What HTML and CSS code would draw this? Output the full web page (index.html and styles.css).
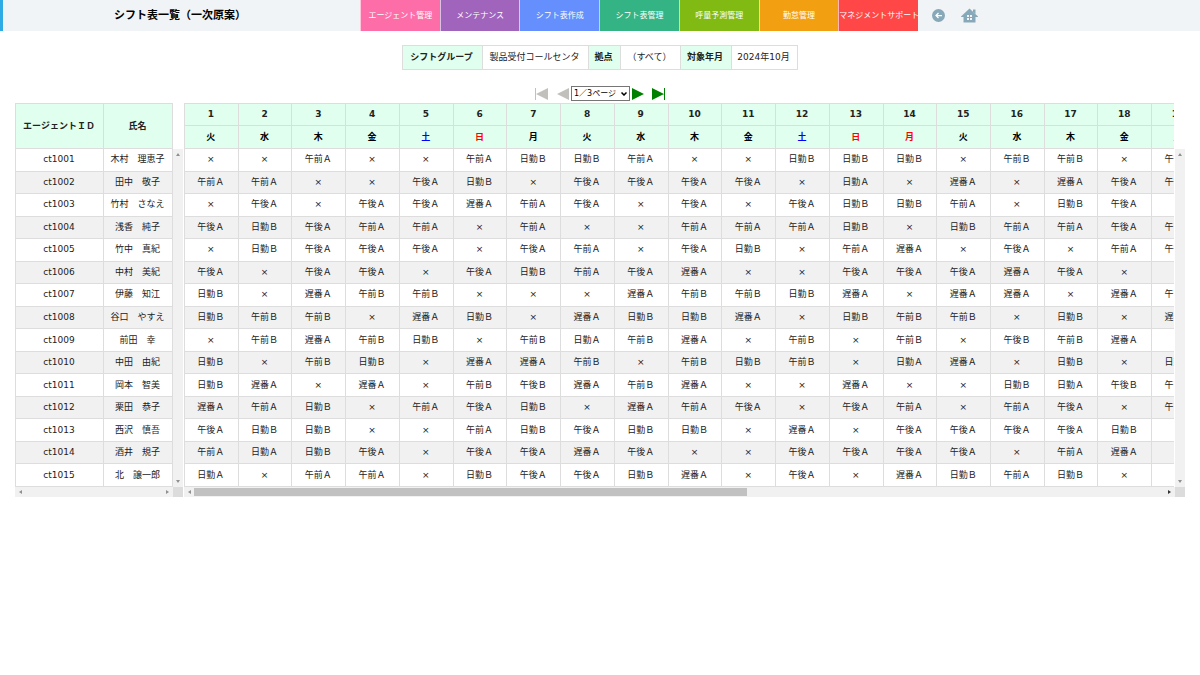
FILE: index.html
```html
<!DOCTYPE html>
<html lang="ja">
<head>
<meta charset="utf-8">
<title>シフト表一覧（一次原案）</title>
<link rel="stylesheet" href="styles.css">
</head>
<body>
<header class="topbar">
  <h1 class="title">シフト表一覧（一次原案）</h1>
  <nav class="menu">
    <a class="menu-item pink" href="#">エージェント管理</a>
    <a class="menu-item purple" href="#">メンテナンス</a>
    <a class="menu-item blue" href="#">シフト表作成</a>
    <a class="menu-item green" href="#">シフト表管理</a>
    <a class="menu-item lime" href="#">呼量予測管理</a>
    <a class="menu-item orange" href="#">勤怠管理</a>
    <a class="menu-item red" href="#">マネジメントサポート</a>
  </nav>
  <div class="tools">
    <a class="tool" href="#" aria-label="戻る"><svg width="13" height="13" viewBox="0 0 26 26"><circle cx="13" cy="13" r="13" fill="#87a8b8"/><path d="M20 13H8M13 8l-5 5 5 5" fill="none" stroke="#fff" stroke-width="2.500"/></svg></a>
    <a class="tool" href="#" aria-label="ホーム"><svg width="17" height="15" viewBox="0 0 34 30"><path d="M17 1L34 17v1h-5v11H5V18H0v-1z" fill="#87a8b8"/><path d="M24 3h5v9l-5-4z" fill="#87a8b8"/><path d="M12 14h4v4h-4zM18 14h4v4h-4zM12 20h4v4h-4zM18 20h4v4h-4z" fill="#f0f4f7"/></svg></a>
  </div>
</header>

<main class="content">
  <table class="filters">
    <tr>
      <th class="w-group" scope="row">シフトグループ</th><td class="w-group-value">製品受付コールセンタ</td>
      <th class="w-site" scope="row">拠点</th><td class="w-site-value">（すべて）</td>
      <th class="w-month" scope="row">対象年月</th><td class="w-month-value">2024年10月</td>
    </tr>
  </table>

  <div class="pager">
    <button class="page-button off" type="button" aria-label="最初のページ" disabled><svg width="13" height="12" viewBox="0 0 13 12"><path d="M0 0h1v12H0zM13 0v12L1 6z" fill="currentColor"/></svg></button>
    <button class="page-button off" type="button" aria-label="前のページ" disabled><svg width="12" height="12" viewBox="0 0 12 12"><path d="M12 0v12L0 6z" fill="currentColor"/></svg></button>
    <span class="page-select">
      <select aria-label="ページ"><option>1／3ページ</option></select>
      <svg class="chevron" width="6" height="4" viewBox="0 0 6 4"><path d="M0.500 0.500L3 3 5.500 0.500" fill="none" stroke="#000" stroke-width="1.500"/></svg>
    </span>
    <button class="page-button" type="button" aria-label="次のページ"><svg width="12" height="12" viewBox="0 0 12 12"><path d="M0 0v12l12-6z" fill="currentColor"/></svg></button>
    <button class="page-button last" type="button" aria-label="最後のページ"><svg width="13" height="12" viewBox="0 0 13 12"><path d="M12 0h1v12h-1zM0 0v12l12-6z" fill="currentColor"/></svg></button>
  </div>

  <div class="panels">
    <section class="panel agents">
      <div class="view">
        <table class="grid agent-grid">
          <thead><tr class="tall"><th class="col-id" scope="col">エージェントＩＤ</th><th scope="col">氏名</th></tr></thead>
          <tbody id="agents"></tbody>
        </table>
      </div>
      <div class="vbar"><i class="arrow up"></i><i class="arrow down"></i></div>
      <div class="hbar"><i class="arrow left"></i><i class="arrow right"></i></div>
      <div class="corner"></div>
    </section>
    <section class="panel shifts">
      <div class="view">
        <table class="grid shift-grid">
          <thead><tr class="date-row" id="dates"></tr><tr class="weekday-row" id="weekdays"></tr></thead>
          <tbody id="shifts"></tbody>
        </table>
      </div>
      <div class="vbar"><i class="arrow up"></i><i class="arrow down"></i></div>
      <div class="hbar"><i class="arrow left"></i><span class="track"><i class="thumb"></i></span><i class="arrow right dark"></i></div>
      <div class="corner"></div>
    </section>
  </div>
</main>
<script src="script.js"></script>
</body>
</html>
```

FILE: styles.css
```css
* { box-sizing: border-box; }

body {
  margin: 0;
  background: #fff;
  color: #222;
  font-family: "DejaVu Sans", "Noto Sans CJK JP", sans-serif;
  font-size: 9px;
  line-height: 12px;
}

.topbar {
  display: flex;
  height: 31px;
  background: #f0f4f7;
  border-left: 3px solid #2eaae5;
}

.title {
  flex: 0 0 357px;
  margin: 0;
  padding-right: 4px;
  border-left: 1px solid #fff;
  color: #000;
  font-size: 11px;
  line-height: 32px;
  text-align: center;
}

.menu { display: flex; flex: 0 0 558px; }

.menu-item {
  flex: 1 1 0;
  min-width: 0;
  border-left: 1px solid rgba(255, 255, 255, 0.6);
  color: #fff;
  font-size: 8px;
  line-height: 32px;
  text-align: center;
  text-decoration: none;
  white-space: nowrap;
}

.pink { background: #fd6ea8; }
.purple { background: #a064bd; }
.blue { background: #648ffc; }
.green { background: #34b385; }
.lime { background: #80ba12; }
.orange { background: #f39f12; }
.red { background: #ff4747; }

.tools { display: flex; align-items: center; gap: 16px; padding-left: 14px; }
.tool { display: flex; }

.content { padding: 14px 15px; }

.filters {
  margin: 0 auto;
  border-collapse: collapse;
  table-layout: fixed;
  width: 396px;
}

.filters th, .filters td {
  height: 24px;
  padding: 0 2px 1px 0;
  border: 1px solid #ddd;
  text-align: center;
  white-space: nowrap;
}

.filters th { background: #e0ffef; }
.w-group { width: 80px; }
.w-group-value { width: 106px; }
.w-site { width: 32px; }
.w-site-value { width: 60px; }
.w-month { width: 51px; }
.w-month-value { width: 66px; }

.pager {
  display: flex;
  align-items: center;
  justify-content: center;
  gap: 2px;
  height: 15px;
  margin: 16px 0 2px;
}

.page-button {
  display: flex;
  padding: 0;
  border: 0;
  background: none;
  color: #008000;
}

.page-button.off { color: #c2c0bc; }
.page-button.off:first-child { margin-right: 7px; }
.page-button.last { margin-left: 6px; }

.page-select { position: relative; display: flex; }

.page-select select {
  width: 59px;
  height: 15px;
  padding: 0 2px;
  appearance: none;
  border: 1px solid #767676;
  border-radius: 0;
  background: #fff;
  color: #000;
  font: inherit;
  font-size: 8px;
}

.chevron { position: absolute; top: 6px; right: 3px; }

.panels { display: flex; gap: 1px; }

.panel {
  display: grid;
  grid-template-columns: minmax(0, 1fr) 10px;
  grid-template-rows: auto 10px;
}

.agents { flex: 0 0 168px; }
.shifts { flex: 1 1 0; min-width: 0; }
.view { overflow: hidden; }
.shifts .view { margin-right: 1px; }

.grid {
  border-collapse: collapse;
  table-layout: fixed;
  height: 384px;
}

.agent-grid { width: 158px; }
.shift-grid { width: 1022px; }
.col-id { width: 88px; }

.grid th, .grid td {
  padding: 0 1px 1px 0;
  border: 1px solid #ddd;
  text-align: center;
  white-space: nowrap;
}

.grid th { background: #e0ffef; }
.grid tbody tr:nth-child(even) { background: #f1f1f1; }
.tall { height: 45px; }
.date-row { height: 22px; }
.weekday-row { height: 23px; }
.weekday { color: #000; }
.grid .sat { color: #00f; }
.grid .sun { color: #f00; }

.vbar, .hbar {
  display: flex;
  align-items: center;
  justify-content: space-between;
  background: #f1f1f1;
}

.vbar { flex-direction: column; margin-top: 46px; padding: 4px 0; }
.hbar { padding: 0 4px; }
.corner { background: #dcdcdc; }

.arrow { width: 0; height: 0; border: 2px solid transparent; color: #909090; }
.up { border-top: 0; border-bottom: 3px solid currentColor; }
.down { border-bottom: 0; border-top: 3px solid currentColor; }
.left { border-left: 0; border-right: 3px solid currentColor; }
.right { border-right: 0; border-left: 3px solid currentColor; }
.dark { color: #333; }

.track { flex: 1; height: 8px; margin: 0 4px 0 3px; }
.thumb { display: block; width: 57%; height: 8px; background: #c1c1c1; }
```

FILE: script.js
```javascript
const LABELS = {
  x: "×", a: "午前Ａ", b: "午前Ｂ", c: "午後Ａ", d: "午後Ｂ",
  e: "日勤Ａ", f: "日勤Ｂ", g: "遅番Ａ"
};

// One letter per day, keyed to LABELS.
const ROWS = [
  ["ct1001", "木村　理恵子", "xxaxxaffaxxfffxbbxc"],
  ["ct1002", "田中　敬子", "aaxxcfxccccxexgxgcc"],
  ["ct1003", "竹村　さなえ", "xcxccgacxcxcffaxfcx"],
  ["ct1004", "浅香　純子", "cfcaaxaxxaaafxfaaca"],
  ["ct1005", "竹中　真紀", "xfcccxcaxcfxagxcxac"],
  ["ct1006", "中村　美紀", "cxccxcfacgxxcccgcxx"],
  ["ct1007", "伊藤　知江", "fxgbbxxxgbbfgxggxga"],
  ["ct1008", "谷口　やすえ", "fbbxgfxgffgxfbbxfxg"],
  ["ct1009", "前田　幸", "xbgbfxbebgxbxbxdbgx"],
  ["ct1010", "中田　由紀", "fxbfxggbxbfbxegxfxf"],
  ["ct1011", "岡本　智美", "fgxgxbdgbgxxgxxfeda"],
  ["ct1012", "栗田　恭子", "gafxacfxgacxcaxacxa"],
  ["ct1013", "西沢　慎吾", "cffxxafcffxgxccccfx"],
  ["ct1014", "酒井　規子", "aefcxccgcxxccccxagx"],
  ["ct1015", "北　譲一郎", "exaaxfccfgxcxgfafxx"]
];

const WEEKDAYS = [..."火水木金土日月火水木金土日月火水木金土"];
const HOLIDAYS = [14];

function dayClass(name, date) {
  if (name === "日" || HOLIDAYS.includes(date)) return "sun";
  return name === "土" ? "sat" : "weekday";
}

document.getElementById("dates").innerHTML =
  WEEKDAYS.map((_, i) => `<th scope="col">${i + 1}</th>`).join("");
document.getElementById("weekdays").innerHTML =
  WEEKDAYS.map((w, i) => `<th scope="col" class="${dayClass(w, i + 1)}">${w}</th>`).join("");
document.getElementById("agents").innerHTML =
  ROWS.map(([id, name]) => `<tr><td>${id}</td><td>${name}</td></tr>`).join("");
document.getElementById("shifts").innerHTML =
  ROWS.map(([, , days]) => `<tr>${[...days].map(d => `<td>${LABELS[d]}</td>`).join("")}</tr>`).join("");
```
